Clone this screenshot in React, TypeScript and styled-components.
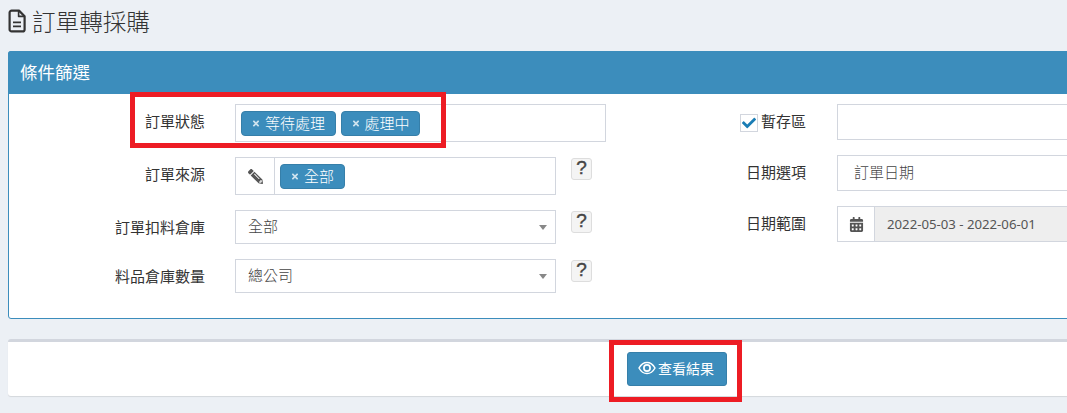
import styled, { createGlobalStyle } from 'styled-components';
import { FaCalendarAlt, FaCheck, FaPencilAlt, FaTimes } from 'react-icons/fa';

const GlobalStyle = createGlobalStyle`
  html, body {
    margin: 0;
    padding: 0;
    height: 413px;
    overflow: hidden;
    background: #ecf0f5;
  }
  body {
    font-family: "Noto Sans", "Noto Sans CJK TC", sans-serif;
    color: #333;
  }
`;

const Page = styled.div`
  position: relative;
  width: 1160px;
  padding: 0 8px;
  box-sizing: border-box;
`;

const Title = styled.h1`
  display: flex;
  align-items: center;
  gap: 6px;
  height: 51px;
  margin: 0;
  padding-bottom: 9px;
  box-sizing: border-box;
  font-size: 23.6px;
  font-weight: 300;
  font-family: "Noto Sans CJK TC", sans-serif;
  color: #333;
`;

const Panel = styled.section`
  height: 268px;
  box-sizing: border-box;
  background: #fff;
  border: 1px solid #3c8dbc;
  border-radius: 3px;
`;

const PanelHeader = styled.div`
  height: 43px;
  margin: -1px -1px 0;
  padding: 0 12px 3px;
  box-sizing: border-box;
  display: flex;
  align-items: center;
  background: #3c8dbc;
  border-radius: 3px 3px 0 0;
  color: #fff;
  font-size: 17.5px;
`;

const PanelBody = styled.div`
  display: flex;
  padding-top: 10px;
`;

const Column = styled.div<{ $width: number; $gap: number }>`
  width: ${({ $width }) => $width}px;
  flex-shrink: 0;
  display: flex;
  flex-direction: column;
  gap: ${({ $gap }) => $gap}px;
`;

const Row = styled.div`
  display: flex;
  align-items: flex-start;
`;

const Label = styled.label<{ $width: number; $height: number; $after: number; $lift: number }>`
  width: ${({ $width }) => $width}px;
  height: ${({ $height }) => $height}px;
  margin-right: ${({ $after }) => $after}px;
  padding-bottom: ${({ $lift }) => $lift}px;
  flex-shrink: 0;
  box-sizing: border-box;
  display: flex;
  align-items: center;
  justify-content: flex-end;
  gap: 3px;
  font-size: 15px;
  font-family: "Noto Sans CJK TC", sans-serif;
  color: #333;
`;

const Field = styled.div<{ $width: number; $height: number }>`
  width: ${({ $width }) => $width}px;
  height: ${({ $height }) => $height}px;
  flex-shrink: 0;
  box-sizing: border-box;
  display: flex;
  align-items: center;
  background: #fff;
  border: 1px solid #d2d6de;
  font-size: 15px;
  font-weight: 300;
  font-family: "Noto Sans CJK TC", sans-serif;
  color: #444;
`;

const TagList = styled.div`
  display: flex;
  align-items: center;
  gap: 5px;
  padding-left: 5px;
`;

const Tag = styled.span`
  height: 25px;
  padding: 0 9.5px 2px 10px;
  box-sizing: border-box;
  display: inline-flex;
  align-items: center;
  gap: 5px;
  background: #3c8dbc;
  border: 1px solid #367fa9;
  border-radius: 4px;
  color: #fff;
  font-size: 15px;

  svg {
    width: 8px;
    height: 9px;
    margin-top: 2px;
    color: rgba(255, 255, 255, 0.75);
  }
`;

const AddonIcon = styled.span<{ $width: number; $flip?: boolean }>`
  width: ${({ $width }) => $width}px;
  height: 100%;
  flex-shrink: 0;
  box-sizing: border-box;
  display: flex;
  align-items: center;
  justify-content: center;
  border-right: 1px solid #d2d6de;
  background: #fff;
  color: #555;

  svg {
    width: 15px;
    height: 15px;
    transform: ${({ $flip }) => ($flip ? 'scaleX(-1)' : 'none')};
  }
`;

const SelectText = styled.span<{ $pad: number }>`
  flex: 1;
  padding-left: ${({ $pad }) => $pad}px;
  padding-bottom: 3px;
`;

const Caret = styled.span`
  width: 0;
  height: 0;
  margin-right: 8px;
  border-left: 4px solid transparent;
  border-right: 4px solid transparent;
  border-top: 5px solid #888;
`;

const HelpButton = styled.button`
  width: 21px;
  height: 22px;
  margin: 1px 0 0 15px;
  padding: 0 0 3px;
  box-sizing: border-box;
  background: #f4f4f4;
  border: 1px solid #ddd;
  border-radius: 3px;
  color: #444;
  font-family: "Liberation Sans", sans-serif;
  font-size: 19px;
  font-weight: 400;
  -webkit-text-stroke: 0.4px #444;
  line-height: 18px;
`;

const CheckBox = styled.span`
  width: 18px;
  height: 18px;
  margin-top: 4px;
  box-sizing: border-box;
  display: flex;
  align-items: center;
  justify-content: center;
  border: 1px solid #d2d6de;
  color: #1a7db5;

  svg {
    width: 14px;
    height: 14px;
  }
`;

const DateText = styled.span`
  flex: 1;
  height: 100%;
  padding-left: 12px;
  display: flex;
  align-items: center;
  background: #eee;
  font-family: "Noto Sans", sans-serif;
  font-size: 13.2px;
  font-weight: 400;
  color: #555;
`;

const Footer = styled.div`
  margin-top: 20px;
  padding: 10px 0 10px 619px;
  background: #fff;
  border-top: 3px solid #d2d6de;
  border-radius: 3px;
  box-shadow: 0 1px 1px rgba(0, 0, 0, 0.1);
`;

const PrimaryButton = styled.button`
  width: 100px;
  height: 34px;
  padding: 0 2px 2px 0;
  display: flex;
  align-items: center;
  justify-content: center;
  gap: 2px;
  background: #3c8dbc;
  border: 1px solid #367fa9;
  border-radius: 3px;
  color: #fff;
  font-family: "Noto Sans CJK TC", sans-serif;
  font-size: 14px;
`;

const Highlight = styled.div<{ $x: number; $y: number; $w: number; $h: number }>`
  position: absolute;
  left: ${({ $x }) => $x}px;
  top: ${({ $y }) => $y}px;
  width: ${({ $w }) => $w}px;
  height: ${({ $h }) => $h}px;
  box-sizing: border-box;
  border: 5px solid #ed1c24;
  pointer-events: none;
`;

const FileIcon = () => (
  <svg width="18" height="24" viewBox="0 0 18 24" fill="none" stroke="#333" strokeWidth="2.2" strokeLinejoin="round">
    <path d="M3.5 1.6h7.5l5.6 5.6v13.2a2 2 0 0 1-2 2h-11a2 2 0 0 1-2-2V3.6a2 2 0 0 1 2-2z" />
    <path d="M10.6 1.8v5.6h5.8" strokeWidth="1.6" />
    <path d="M5 13.4h8M5 17.4h8" strokeWidth="1.9" />
  </svg>
);

const EyeIcon = () => (
  <svg width="18" height="14" viewBox="0 0 18 14" fill="none" stroke="#fff">
    <path d="M1 7c2-3.600 4.800-5.600 8-5.600S15 3.400 17 7c-2 3.600-4.800 5.600-8 5.600S3 10.600 1 7z" strokeWidth="1.500" />
    <circle cx="9" cy="7" r="3.100" strokeWidth="1.700" />
  </svg>
);

const App = () => {
  return (
    <Page>
      <GlobalStyle />
      <Title>
        <FileIcon />
        訂單轉採購
      </Title>

      <Panel>
        <PanelHeader>條件篩選</PanelHeader>
        <PanelBody>
          <Column $width={613} $gap={15}>
            <Row>
              <Label $width={196} $height={38} $after={30} $lift={6}>訂單狀態</Label>
              <Field $width={371} $height={38}>
                <TagList>
                  <Tag><FaTimes />等待處理</Tag>
                  <Tag><FaTimes />處理中</Tag>
                </TagList>
              </Field>
            </Row>
            <Row>
              <Label $width={196} $height={38} $after={30} $lift={5}>訂單來源</Label>
              <Field $width={321} $height={38}>
                <AddonIcon $width={39} $flip><FaPencilAlt /></AddonIcon>
                <TagList>
                  <Tag><FaTimes />全部</Tag>
                </TagList>
              </Field>
              <HelpButton>?</HelpButton>
            </Row>
            <Row>
              <Label $width={196} $height={34} $after={30} $lift={2}>訂單扣料倉庫</Label>
              <Field $width={321} $height={34}>
                <SelectText $pad={12}>全部</SelectText>
                <Caret />
              </Field>
              <HelpButton>?</HelpButton>
            </Row>
            <Row>
              <Label $width={196} $height={34} $after={30} $lift={2}>料品倉庫數量</Label>
              <Field $width={321} $height={34}>
                <SelectText $pad={12}>總公司</SelectText>
                <Caret />
              </Field>
              <HelpButton>?</HelpButton>
            </Row>
          </Column>

          <Column $width={500} $gap={15}>
            <Row>
              <Label $width={184} $height={36} $after={31} $lift={3}>
                <CheckBox><FaCheck /></CheckBox>
                暫存區
              </Label>
              <Field $width={300} $height={36} />
            </Row>
            <Row>
              <Label $width={184} $height={36} $after={31} $lift={3}>日期選項</Label>
              <Field $width={300} $height={36}>
                <SelectText $pad={16}>訂單日期</SelectText>
              </Field>
            </Row>
            <Row>
              <Label $width={184} $height={36} $after={31} $lift={4}>日期範圍</Label>
              <Field $width={300} $height={36}>
                <AddonIcon $width={37}><FaCalendarAlt /></AddonIcon>
                <DateText>2022-05-03 - 2022-06-01</DateText>
              </Field>
            </Row>
          </Column>
        </PanelBody>
      </Panel>

      <Footer>
        <PrimaryButton>
          <EyeIcon />
          查看結果
        </PrimaryButton>
      </Footer>

      <Highlight $x={130} $y={92} $w={316} $h={56} />
      <Highlight $x={609} $y={340} $w={133} $h={62} />
    </Page>
  );
};

export default App;
